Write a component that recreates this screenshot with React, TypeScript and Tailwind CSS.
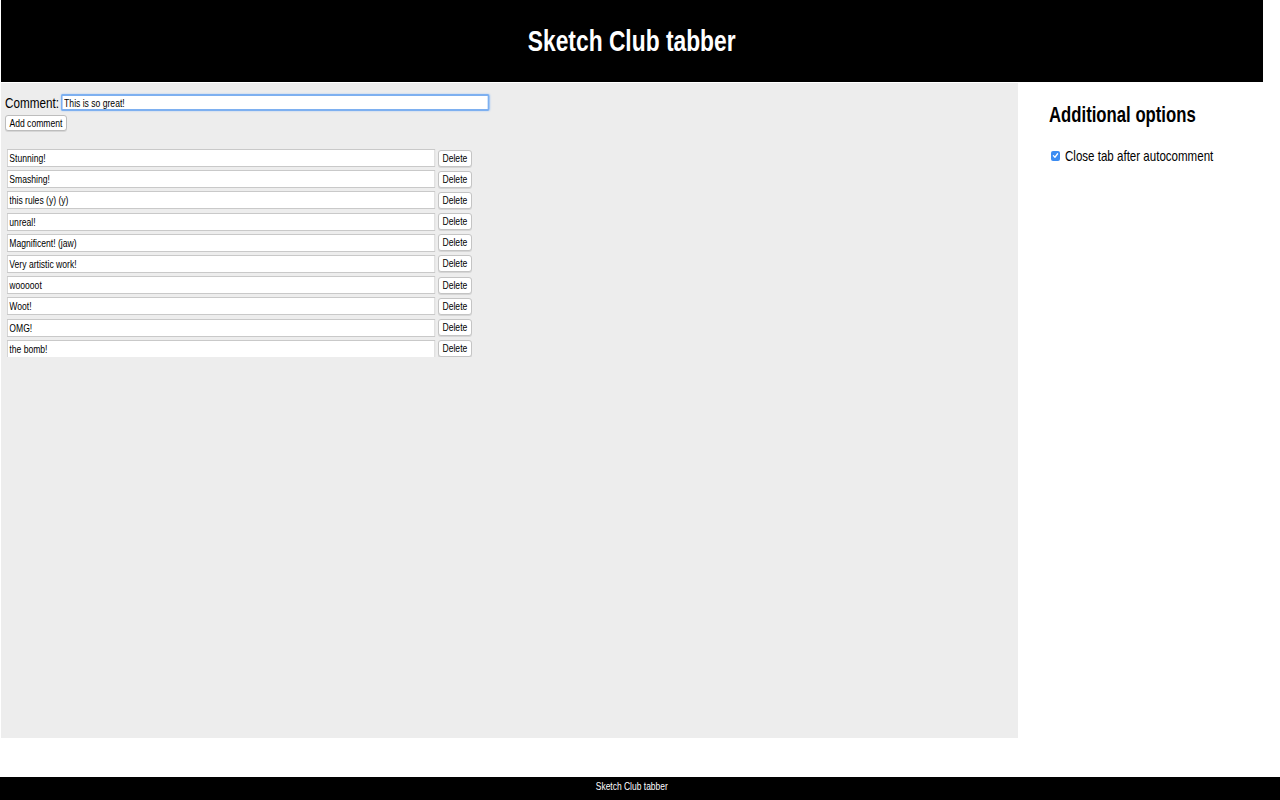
const comments = [
  "Stunning!",
  "Smashing!",
  "this rules (y) (y)",
  "unreal!",
  "Magnificent! (jaw)",
  "Very artistic work!",
  "wooooot",
  "Woot!",
  "OMG!",
  "the bomb!",
];

// the screenshot is squeezed horizontally, so text is narrowed with scale-x
const squeeze = "inline-block whitespace-nowrap scale-x-[0.78]";

function Field({ value, width, focused }: { value: string; width: number; focused?: boolean }) {
  return (
    <div className="shrink-0 h-full" style={{ width }}>
      <input
        defaultValue={value}
        style={{ width: width / 0.78 }}
        className={
          focused
            ? "block h-full origin-left scale-x-[0.78] bg-white border-2 border-[#7eb0f0] rounded-[2px] px-[2px] text-[11px] outline-none shadow-[0_0_2px_#9cc3f5]"
            : "block h-full origin-left scale-x-[0.78] bg-white border border-[#c9c9c9] px-[2px] text-[11px] outline-none"
        }
      />
    </div>
  );
}

export default function App() {
  return (
    <div className="min-h-screen bg-white text-black font-['Liberation_Sans',Arial,sans-serif]">
      {/* Header */}
      <header className="ml-px w-[1262px] h-[82px] bg-black flex items-center justify-center">
        <h1 className="inline-block whitespace-nowrap scale-x-[0.76] text-white text-[30px] font-bold leading-none">Sketch Club tabber</h1>
      </header>

      <div className="flex h-[655px] mt-px">
        {/* Comments panel */}
        <main className="ml-px w-[1017px] bg-[#ededed] pt-[11px] pl-[4px]">
          <div className="flex items-center gap-[3px] h-[17px]">
            <label className="w-[53px] text-[15px] leading-none whitespace-nowrap origin-left scale-x-[0.78]">Comment:</label>
            <Field value="This is so great!" width={428} focused />
          </div>
          <button className="mt-[4px] w-[62px] h-[16px] flex items-center justify-center bg-white border border-[#bdbdbd] rounded-[3px] text-[11px] leading-none shadow-[0_1px_0_#d6d6d6]">
            <span className={squeeze}>Add comment</span>
          </button>

          <div className="mt-[18px] ml-[2px] h-[208px] overflow-hidden flex flex-col gap-[3.2px]">
            {comments.map((c) => (
              <div key={c} className="flex items-center gap-[3px] shrink-0 h-[18px]">
                <Field value={c} width={428} />
                <button className="w-[34px] h-[17px] flex items-center justify-center bg-white border border-[#c4c4c4] rounded-[3px] text-[11px] leading-none shadow-[0_1px_0_#d6d6d6]">
                  <span className={squeeze}>Delete</span>
                </button>
              </div>
            ))}
          </div>
        </main>

        {/* Options sidebar */}
        <aside className="flex-1 pl-[31px] pt-[19px]">
          <h2 className="w-[146px] text-[22px] font-bold leading-[26px] whitespace-nowrap origin-left scale-x-[0.76]">Additional options</h2>
          <label className="mt-[20px] ml-[2px] flex items-center gap-[5px] text-[15px] leading-none">
            <span className="shrink-0 w-[9px] h-[10px] rounded-[2px] bg-[#3b8cf2] flex items-center justify-center">
              <svg viewBox="0 0 10 10" className="w-[7px] h-[7px]" fill="none" stroke="white" strokeWidth="1.8" strokeLinecap="round" strokeLinejoin="round">
                <path d="M2 5.2 L4.2 7.5 L8 2.5" />
              </svg>
            </span>
            <span className="w-[146px] whitespace-nowrap origin-left scale-x-[0.77]">Close tab after autocomment</span>
          </label>
        </aside>
      </div>

      <div className="h-[39px]" />

      {/* Footer */}
      <footer className="h-[23px] bg-black text-white text-[11px] text-center pt-[1px] pr-[16px]">
        <span className="inline-block scale-x-[0.77]">Sketch Club tabber</span>
      </footer>
    </div>
  );
}
